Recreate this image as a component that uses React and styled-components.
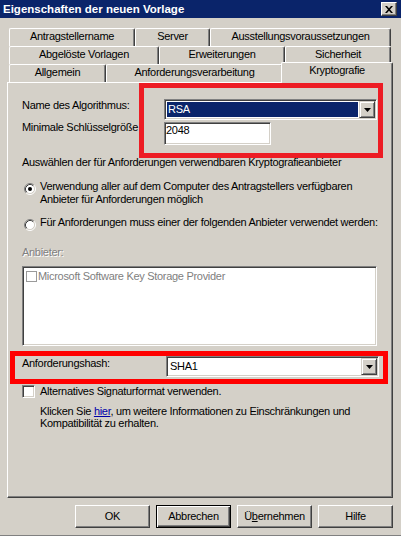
import React from 'react'
import styled, { createGlobalStyle, css } from 'styled-components'

const GlobalStyle = createGlobalStyle`
  html, body {
    margin: 0;
    padding: 0;
    background: #d4d0c8;
  }
  body {
    font-family: "Liberation Sans", Arial, sans-serif;
    font-size: 11px;
  }
`

const sunken = css`
  border: 1px solid;
  border-color: #808080 #fff #fff #808080;
  box-shadow: inset 1px 1px #404040, inset -1px -1px #d4d0c8;
`

const raised = css`
  border: 1px solid;
  border-color: #fff #404040 #404040 #fff;
  box-shadow: inset -1px -1px #808080;
`

const Window = styled.div`
  width: 401px;
  height: 536px;
  box-sizing: border-box;
  display: flex;
  flex-direction: column;
  background: #d4d0c8;
  border-bottom: 1px solid #808080;
  color: #000;
  font-size: 11px;
  line-height: 13px;
  letter-spacing: -0.3px;
`

const TitleBar = styled.div`
  flex: 0 0 18px;
  display: flex;
  align-items: center;
  padding: 0 4px 0 3px;
  background: #0a246a;
`

const Title = styled.div`
  flex: 1;
  color: #fff;
  font-size: 11.5px;
  font-weight: bold;
  letter-spacing: 0;
`

const CloseButton = styled.div`
  width: 16px;
  height: 14px;
  box-sizing: border-box;
  display: flex;
  align-items: center;
  justify-content: center;
  background: #d4d0c8;
  ${raised};
`

const Body = styled.div`
  flex: 1;
  display: flex;
  flex-direction: column;
  padding: 10px 8px 0 7px;
`

const TabStrip = styled.div`
  display: flex;
  flex-direction: column;
  padding: 0 2px;
`

const TabRow = styled.div`
  display: flex;
  align-items: flex-end;
  height: 18px;
`

const Tab = styled.div`
  position: relative;
  z-index: ${(p) => (p.$active ? 1 : 'auto')};
  flex: 0 0 ${(p) => p.$width}px;
  height: ${(p) => (p.$active ? 21 : 18)}px;
  margin: ${(p) => (p.$active ? '0 -2px -1px' : '0')};
  box-sizing: border-box;
  display: flex;
  justify-content: center;
  padding-top: 1px;
  background: #d4d0c8;
  border-top: 1px solid #fff;
  border-left: 1px solid #fff;
  border-right: 1px solid #404040;
  border-radius: 2px 2px 0 0;
  box-shadow: inset -1px 0 #808080;
  white-space: nowrap;
`

const Panel = styled.div`
  height: 416px;
  box-sizing: border-box;
  display: flex;
  flex-direction: column;
  align-items: flex-start;
  border-top: 1px solid #fff;
  border-left: 1px solid #fff;
  border-right: 1px solid #404040;
  border-bottom: 1px solid #404040;
  box-shadow: inset -1px -1px #808080;
`

const TopSection = styled.div`
  display: flex;
  align-items: flex-start;
`

const LabelColumn = styled.div`
  width: 131px;
  box-sizing: border-box;
  padding-left: 14px;
  display: flex;
  flex-direction: column;
`

const FieldLabel = styled.div`
  margin-top: ${(p) => p.$top || 0}px;
  white-space: nowrap;
`

const Highlight = styled.div`
  display: flex;
  flex-direction: ${(p) => p.$direction || 'column'};
  align-items: flex-start;
  gap: 2px;
  border: 5px solid ${(p) => p.$color};
  padding: ${(p) => p.$padding};
  margin: ${(p) => p.$margin || 0};
`

const ComboBox = styled.div`
  width: 213px;
  height: 21px;
  box-sizing: border-box;
  display: flex;
  padding: 1px;
  background: #fff;
  ${sunken};
`

const ComboValue = styled.div`
  flex: 1;
  margin: 1px;
  padding-left: 1px;
  line-height: 15px;
  background: ${(p) => (p.$selected ? '#0a246a' : 'transparent')};
  color: ${(p) => (p.$selected ? '#fff' : '#000')};
`

const DropButton = styled.div`
  width: 16px;
  box-sizing: border-box;
  display: flex;
  align-items: center;
  justify-content: center;
  background: #d4d0c8;
  border: 1px solid;
  border-color: #d4d0c8 #404040 #404040 #d4d0c8;
  box-shadow: inset 1px 1px #fff, inset -1px -1px #808080;
`

const EditBox = styled.div`
  width: 107px;
  height: 23px;
  box-sizing: border-box;
  padding: 1px;
  background: #fff;
  ${sunken};
`

const Text = styled.div`
  margin: ${(p) => p.$margin || 0};
  white-space: nowrap;
`

const RadioOption = styled.div`
  display: flex;
  align-items: flex-start;
  gap: 4px;
  margin-top: ${(p) => p.$top}px;
  padding-left: 16px;
  white-space: nowrap;
`

const RadioMark = styled.svg`
  flex: 0 0 12px;
  margin-top: 3px;
`

const DisabledLabel = styled.div`
  margin: 15px 0 0 14px;
  color: #808080;
  text-shadow: 1px 1px 0 #fff;
`

const ListBox = styled.div`
  width: 355px;
  height: 80px;
  box-sizing: border-box;
  margin: 7px 0 0 14px;
  padding: 3px 2px;
  background: #fff;
  ${sunken};
`

const ListItem = styled.div`
  display: flex;
  align-items: flex-start;
  gap: 1px;
  color: #808080;
  white-space: nowrap;
`

const ListCheck = styled.span`
  flex: 0 0 11px;
  height: 11px;
  box-sizing: border-box;
  margin: 1px 0 0 1px;
  border: 1px solid #9a9a9a;
  background: #fff;
`

const HashLabel = styled.div`
  flex: 0 0 142px;
  margin-top: 1px;
`

const CheckRow = styled.div`
  display: flex;
  align-items: flex-start;
  gap: 5px;
  margin: 1px 0 0 14px;
  white-space: nowrap;
`

const CheckBox = styled.span`
  flex: 0 0 13px;
  height: 13px;
  box-sizing: border-box;
  background: #fff;
  ${sunken};
`

const InfoText = styled.div`
  margin: 7px 0 0 32px;
  line-height: 12px;
  white-space: nowrap;
`

const Link = styled.span`
  color: #0000a8;
  text-decoration: underline;
`

const ButtonRow = styled.div`
  display: flex;
  justify-content: flex-end;
  gap: 6px;
  margin-top: 7px;
`

const Button = styled.button`
  width: 75px;
  height: 23px;
  box-sizing: border-box;
  padding: 0;
  font: inherit;
  letter-spacing: inherit;
  color: #000;
  background: #d4d0c8;
  ${(p) =>
    p.$default
      ? css`
          border: 1px solid #000;
          box-shadow: inset 1px 1px #fff, inset -1px -1px #404040, inset -2px -2px #808080;
        `
      : raised};
`

const DropArrow = () => (
  <svg width="7" height="4" viewBox="0 0 7 4">
    <polygon points="0,0 7,0 3.5,4" fill="#000" />
  </svg>
)

const Combo = ({ value, selected }) => (
  <ComboBox>
    <ComboValue $selected={selected}>{value}</ComboValue>
    <DropButton>
      <DropArrow />
    </DropButton>
  </ComboBox>
)

const Radio = ({ checked }) => (
  <RadioMark width="12" height="12" viewBox="0 0 12 12">
    <circle cx="6" cy="6" r="4.5" fill="#fff" />
    <path d="M2.11 9.89 A5.5 5.5 0 0 1 9.89 2.11" fill="none" stroke="#808080" />
    <path d="M9.89 2.11 A5.5 5.5 0 0 1 2.11 9.89" fill="none" stroke="#fff" />
    <path d="M2.82 9.18 A4.5 4.5 0 0 1 9.18 2.82" fill="none" stroke="#404040" />
    <path d="M9.18 2.82 A4.5 4.5 0 0 1 2.82 9.18" fill="none" stroke="#d4d0c8" />
    {checked && <circle cx="6" cy="6" r="2" fill="#000" />}
  </RadioMark>
)

const tabRows = [
  [
    { label: 'Antragstellername', width: 126 },
    { label: 'Server', width: 75 },
    { label: 'Ausstellungsvoraussetzungen', width: 181 },
  ],
  [
    { label: 'Abgelöste Vorlagen', width: 150 },
    { label: 'Erweiterungen', width: 126 },
    { label: 'Sicherheit', width: 106 },
  ],
  [
    { label: 'Allgemein', width: 97 },
    { label: 'Anforderungsverarbeitung', width: 177 },
    { label: 'Kryptografie', width: 112, active: true },
  ],
]

const App = () => (
  <Window>
    <GlobalStyle />
    <TitleBar>
      <Title>Eigenschaften der neuen Vorlage</Title>
      <CloseButton>
        <svg width="8" height="7" viewBox="0 0 8 7">
          <path d="M0 0h2l2 2.3 2-2.3h2l-3 3.5 3 3.5h-2l-2-2.3-2 2.3h-2l3-3.5z" fill="#000" />
        </svg>
      </CloseButton>
    </TitleBar>

    <Body>
      <TabStrip>
        {tabRows.map((row, i) => (
          <TabRow key={i}>
            {row.map((tab) => (
              <Tab key={tab.label} $width={tab.width} $active={tab.active}>
                {tab.label}
              </Tab>
            ))}
          </TabRow>
        ))}
      </TabStrip>

      <Panel>
        <TopSection>
          <LabelColumn>
            <FieldLabel $top={16}>Name des Algorithmus:</FieldLabel>
            <FieldLabel $top={9}>Minimale Schlüsselgröße</FieldLabel>
          </LabelColumn>
          <Highlight $color="#ed1c24" $padding="11px 1px 8px 20px">
            <Combo value="RSA" selected />
            <EditBox>2048</EditBox>
          </Highlight>
        </TopSection>

        <Text $margin="-2px 0 0 14px">
          Auswählen der für Anforderungen verwendbaren Kryptografieanbieter
        </Text>

        <RadioOption $top={11}>
          <Radio checked />
          <div>
            Verwendung aller auf dem Computer des Antragstellers verfügbaren
            <br />
            Anbieter für Anforderungen möglich
          </div>
        </RadioOption>

        <RadioOption $top={10}>
          <Radio />
          <div>Für Anforderungen muss einer der folgenden Anbieter verwendet werden:</div>
        </RadioOption>

        <DisabledLabel>Anbieter:</DisabledLabel>
        <ListBox>
          <ListItem>
            <ListCheck />
            Microsoft Software Key Storage Provider
          </ListItem>
        </ListBox>

        <Highlight
          $color="#ff0000"
          $direction="row"
          $padding="0 4px 2px 7px"
          $margin="5px 0 0 2px"
        >
          <HashLabel>Anforderungshash:</HashLabel>
          <Combo value="SHA1" />
        </Highlight>

        <CheckRow>
          <CheckBox />
          Alternatives Signaturformat verwenden.
        </CheckRow>

        <InfoText>
          Klicken Sie <Link>hier</Link>, um weitere Informationen zu Einschränkungen und
          <br />
          Kompatibilität zu erhalten.
        </InfoText>
      </Panel>

      <ButtonRow>
        <Button>OK</Button>
        <Button $default>Abbrechen</Button>
        <Button>
          Ü<u>b</u>ernehmen
        </Button>
        <Button>Hilfe</Button>
      </ButtonRow>
    </Body>
  </Window>
)

export default App
